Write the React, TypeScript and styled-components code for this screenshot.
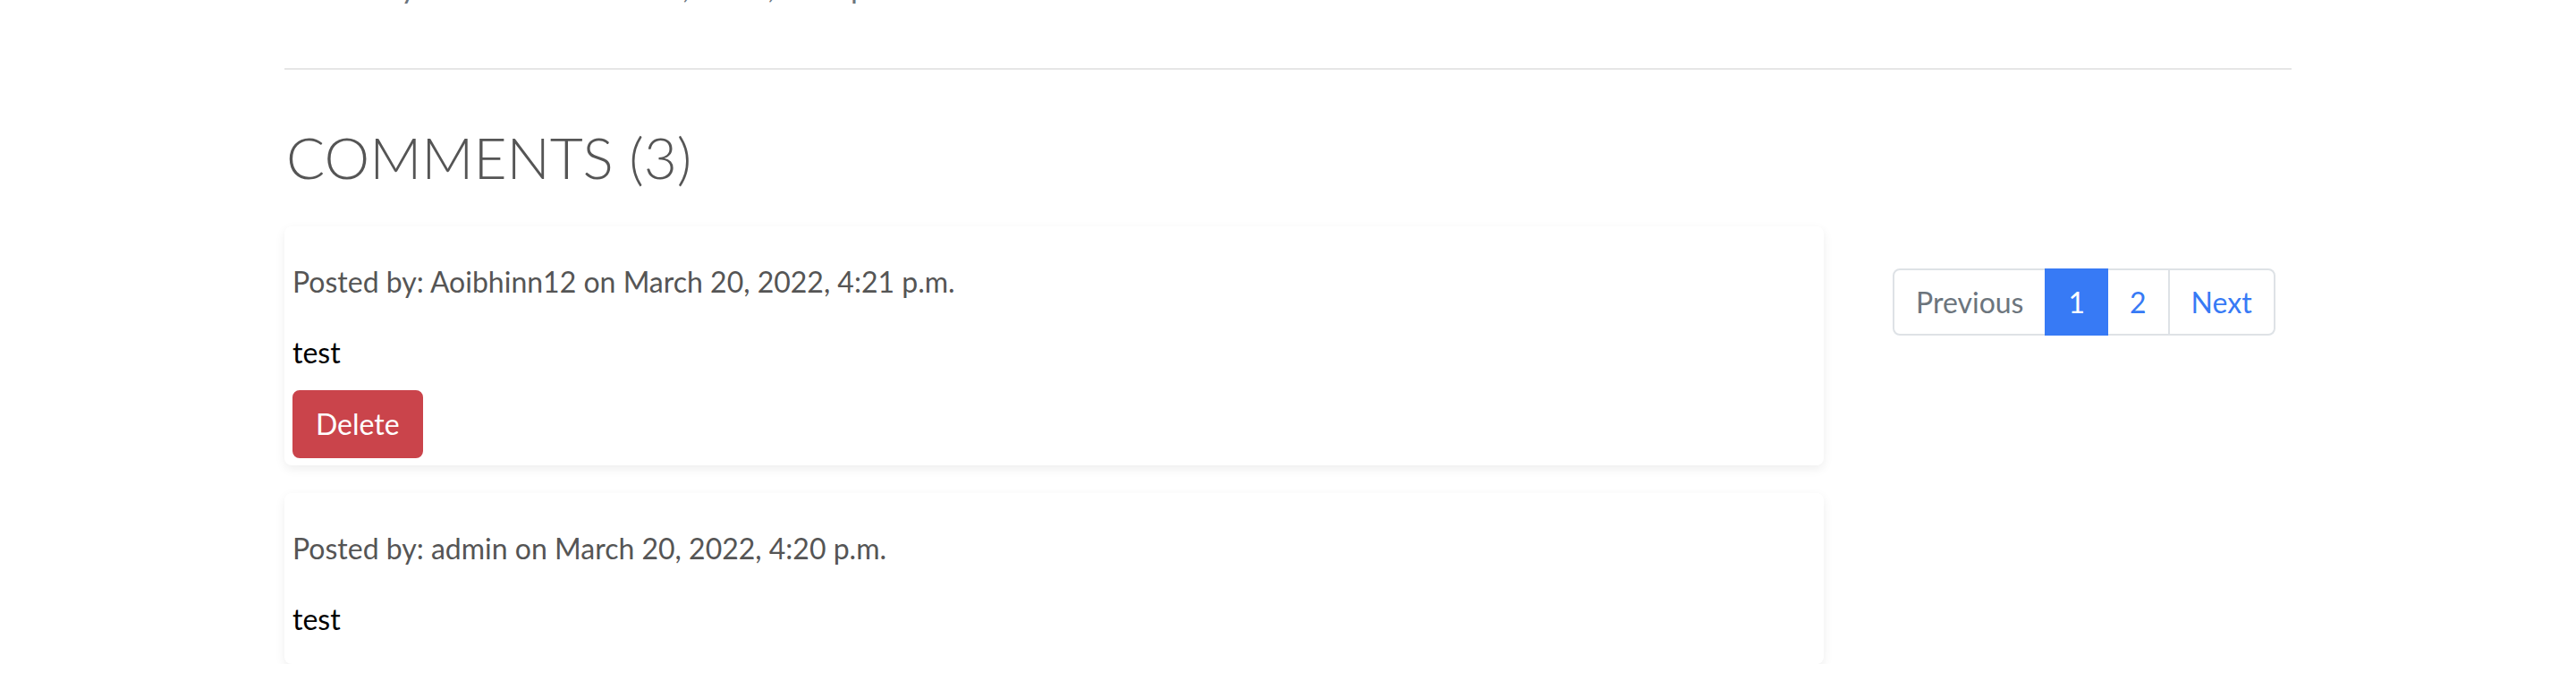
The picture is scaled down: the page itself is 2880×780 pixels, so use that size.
import { createGlobalStyle, styled } from "styled-components";

const GlobalStyle = createGlobalStyle`
  html, body {
    margin: 0;
    padding: 0;
    background: #ffffff;
    overflow: hidden;
  }
  body {
    font-family: "Lato", "Open Sans", sans-serif;
    font-size: 32px;
    line-height: 48px;
    color: #000;
  }
  * {
    box-sizing: border-box;
  }
`;

type Comment = {
  author: string;
  date: string;
  body: string;
  canDelete: boolean;
};

const comments: Comment[] = [
  {
    author: "Aoibhinn12",
    date: "March 20, 2022, 4:21 p.m.",
    body: "test",
    canDelete: true,
  },
  {
    author: "admin",
    date: "March 20, 2022, 4:20 p.m.",
    body: "test",
    canDelete: false,
  },
];

function App() {
  return (
    <>
      <GlobalStyle />
      <Page>
        <PostMeta>Posted by admin on March 20, 2022, 4:08 p.m.</PostMeta>
        <Divider />
        <Heading>COMMENTS (3)</Heading>
        <Row>
          <CommentList>
            {comments.map((c, i) => (
              <Card key={i}>
                <Meta>
                  Posted by: {c.author} on {c.date}
                </Meta>
                <Body>{c.body}</Body>
                {c.canDelete && <DeleteButton>Delete</DeleteButton>}
              </Card>
            ))}
          </CommentList>
          <Side>
            <Pagination>
              <PageItem $muted>Previous</PageItem>
              <PageItem $active>1</PageItem>
              <PageItem>2</PageItem>
              <PageItem>Next</PageItem>
            </Pagination>
          </Side>
        </Row>
      </Page>
    </>
  );
}

const Page = styled.div`
  width: 2244px;
  margin: 0 auto;
`;

const PostMeta = styled.p`
  margin: -39px 0 0;
  font-size: 34px;
  color: #6c757d;
`;

const Divider = styled.hr`
  margin: 67px 0 0;
  border: 0;
  border-top: 2px solid #e6e6e6;
`;

const Heading = styled.h2`
  margin: 60px 0 38px 2px;
  font-size: 64px;
  font-weight: 300;
  line-height: 76.8px;
  color: #555555;
`;

const Row = styled.div`
  display: grid;
  grid-template-columns: 1721px 1fr;
  column-gap: 77px;
  align-items: start;
`;

const CommentList = styled.div`
  display: flex;
  flex-direction: column;
  gap: 31px;
`;

const Card = styled.div`
  background: #fff;
  border-radius: 8px;
  padding: 8px 8px 8px 9px;
  box-shadow: 0 4px 12px rgba(0, 0, 0, 0.07);
`;

const Meta = styled.p`
  margin: 30px 0 31px;
  color: #555555;
`;

const Body = styled.p`
  margin: 0 0 18px;
  color: #000;
`;

const DeleteButton = styled.button`
  display: inline-block;
  font-family: inherit;
  font-size: 32px;
  line-height: 48px;
  padding: 12px 24px;
  color: #fff;
  background: #ca444b;
  border: 2px solid #ca444b;
  border-radius: 8px;
  cursor: pointer;
`;

const Side = styled.div`
  padding-top: 47px;
`;

const Pagination = styled.ul`
  display: flex;
  margin: 0;
  padding: 0;
  list-style: none;
`;

const PageItem = styled.li<{ $active?: boolean; $muted?: boolean }>`
  padding: 16px 24px;
  line-height: 39px;
  font-size: 32px;
  margin-left: -2px;
  border: 2px solid ${(p) => (p.$active ? "#377af5" : "#dee2e6")};
  background: ${(p) => (p.$active ? "#377af5" : "#fff")};
  color: ${(p) => (p.$active ? "#fff" : p.$muted ? "#6c757d" : "#377af5")};
  position: relative;
  z-index: ${(p) => (p.$active ? 1 : 0)};

  &:first-child {
    margin-left: 0;
    border-radius: 8px 0 0 8px;
  }
  &:last-child {
    border-radius: 0 8px 8px 0;
  }
`;

export default App;
